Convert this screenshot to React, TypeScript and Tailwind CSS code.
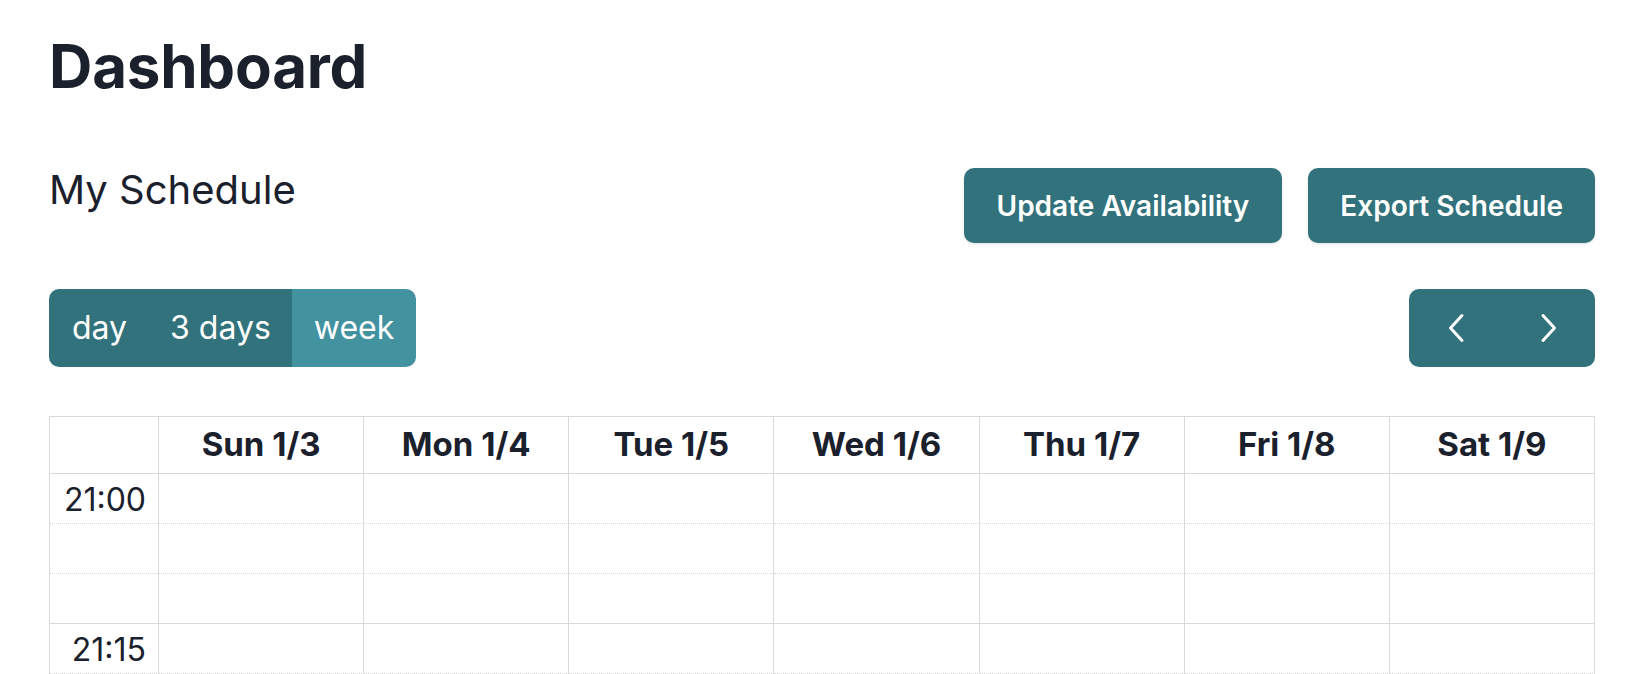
import React from "react";

const days = ["Sun 1/3", "Mon 1/4", "Tue 1/5", "Wed 1/6", "Thu 1/7", "Fri 1/8", "Sat 1/9"];

function Chevron({ dir }: { dir: "left" | "right" }) {
  return (
    <svg width="18" height="30" viewBox="0 0 18 30" fill="none">
      {dir === "left" ? (
        <path d="M15 2.5 L3.5 15 L15 27.5" stroke="white" strokeWidth="3" strokeLinecap="round" strokeLinejoin="round" />
      ) : (
        <path d="M3 2.5 L14.5 15 L3 27.5" stroke="white" strokeWidth="3" strokeLinecap="round" strokeLinejoin="round" />
      )}
    </svg>
  );
}

export default function App() {
  const rows = [
    { label: "21:00", kind: "dotted" },
    { label: "", kind: "dotted" },
    { label: "", kind: "solid" },
    { label: "21:15", kind: "dotted" },
  ];
  return (
    <div
      className="min-h-[674px] bg-white pl-[49px] pr-[45px] pt-[36px] text-[#1a202c]"
      style={{ fontFamily: "Inter, 'Noto Sans', sans-serif" }}
    >
      <h1 className="text-[60px] font-bold leading-none tracking-[-0.2px]">Dashboard</h1>

      <div className="mt-[72px] flex items-start justify-between">
        <h2 className="mt-[2px] text-[40px] font-normal leading-none">My Schedule</h2>
        <div className="flex gap-[26px]">
          <button className="flex h-[75px] items-center rounded-[10px] bg-[#31727c] px-[33px] text-[28px] font-semibold text-white shadow-sm">
            Update Availability
          </button>
          <button className="flex h-[75px] items-center rounded-[10px] bg-[#31727c] px-[32px] text-[28px] font-semibold text-white shadow-sm">
            Export Schedule
          </button>
        </div>
      </div>

      <div className="mt-[46px] flex items-center justify-between">
        <div className="flex h-[78px] overflow-hidden rounded-[10px] text-[32px] text-white">
          <button className="flex items-center bg-[#31727c] pl-[23px] pr-[22px]">day</button>
          <button className="flex items-center bg-[#31727c] px-[21px]">3 days</button>
          <button className="flex items-center bg-[#4292a0] px-[22px]">week</button>
        </div>
        <div className="flex h-[78px] overflow-hidden rounded-[10px] bg-[#31727c]">
          <button className="flex w-[93px] items-center justify-center">
            <Chevron dir="left" />
          </button>
          <button className="flex w-[93px] items-center justify-center">
            <Chevron dir="right" />
          </button>
        </div>
      </div>

      <div className="mt-[49px] border-l border-t border-[#d9d9d9]">
        <div className="grid grid-cols-[109px_repeat(7,1fr)]">
          <div className="h-[57px] border-b border-r border-[#d9d9d9]" />
          {days.map((d) => (
            <div
              key={d}
              className="flex h-[57px] items-center justify-center border-b border-r border-[#d9d9d9] text-[33px] font-bold"
            >
              {d}
            </div>
          ))}
          {rows.map((r, i) => (
            <React.Fragment key={i}>
              <div
                className={`h-[50px] border-r border-b border-[#d9d9d9] pr-[12px] pt-[7px] text-right text-[32px] leading-[38px] ${
                  r.kind === "dotted" ? "border-dotted" : ""
                }`}
                style={{ borderRightStyle: "solid" }}
              >
                {r.label}
              </div>
              {days.map((d) => (
                <div
                  key={d}
                  className={`h-[50px] border-r border-b border-[#d9d9d9] ${r.kind === "dotted" ? "border-dotted" : ""}`}
                  style={{ borderRightStyle: "solid" }}
                />
              ))}
            </React.Fragment>
          ))}
        </div>
      </div>
    </div>
  );
}
